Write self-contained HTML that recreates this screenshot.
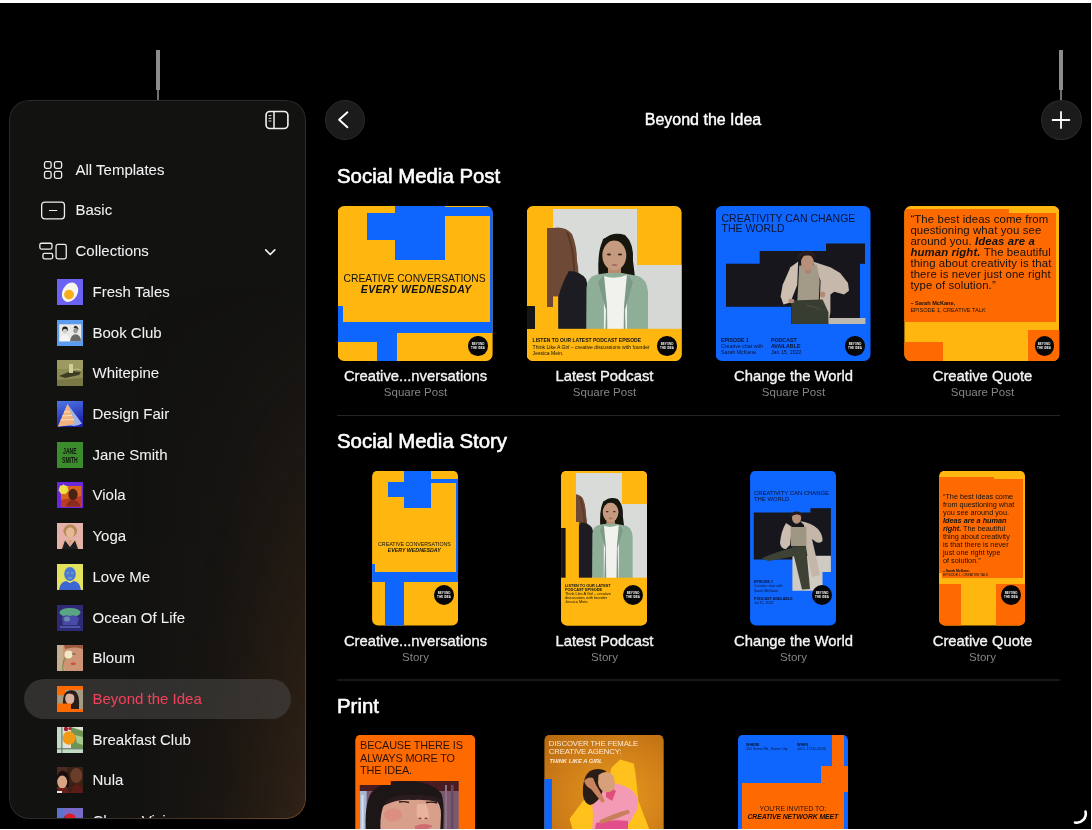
<!DOCTYPE html>
<html><head><meta charset="utf-8">
<style>
*{box-sizing:border-box;margin:0;padding:0}
html,body{width:1092px;height:830px;overflow:hidden;background:#000}
body{position:relative;font-family:"Liberation Sans",sans-serif;color:#fff}
.abs{position:absolute}
#topw,#rightw,#botw{z-index:50}
#topw{left:0;top:0;width:1092px;height:3px;background:#fff}
#rightw{left:1091px;top:0;width:1px;height:830px;background:#fff}
#botw{left:0;top:829px;width:1092px;height:1px;background:#fff}
.handle{width:4px;height:40px;background:#8c8c8c;top:50px}
.handle2{width:2.4px;height:10px;background:#707070;top:90px}
#panel{left:9.3px;top:99.8px;width:296.6px;height:718.9px;border-radius:20px;background:#121211;overflow:hidden}
#panel::before{content:"";position:absolute;inset:0;border-radius:20px;pointer-events:none;
 background:linear-gradient(90deg, rgba(90,55,25,0) 40%, rgba(90,55,25,.13) 72%, rgba(110,66,30,.34) 100%);
 -webkit-mask:linear-gradient(180deg, rgba(0,0,0,0) 25%, rgba(0,0,0,.55) 65%, #000 100%)}
#panel::after{content:"";position:absolute;inset:0;border-radius:20px;padding:1px;z-index:20;pointer-events:none;
 background:radial-gradient(ellipse 240px 520px at 100% 100%, #6e4628 0%, #4a3422 45%, #2c2b2a 100%);
 -webkit-mask:linear-gradient(#000 0 0) content-box, linear-gradient(#000 0 0);-webkit-mask-composite:xor;mask-composite:exclude}
.row{position:absolute;left:0;width:296px;height:40px;line-height:40px;font-size:15px;color:#f2f2f2;-webkit-text-stroke-width:0.05px}
.row .t{position:absolute;left:66px;top:0}
.coll .t{left:81.5px}
.selrow .t{color:#f0415a}
.thumb{position:absolute;left:46px;top:7px;width:26px;height:26px;overflow:hidden}
.sel{position:absolute;left:13px;width:267px;height:40px;border-radius:20px;background:rgba(70,68,66,.6)}
.circ{position:absolute;width:40px;height:40px;border-radius:50%;background:#1b1b1b;border:1px solid #2a2a2a}
.h2{position:absolute;left:337px;font-size:20.4px;-webkit-text-stroke:0.6px #fff;line-height:24px;white-space:nowrap}
.card{position:absolute;clip-path:inset(0 round 6.5px)}
.ct{position:absolute;width:200px;text-align:center;font-size:14.8px;-webkit-text-stroke:0.35px #f4f4f4;line-height:16px;color:#f4f4f4;white-space:nowrap}
.cs{position:absolute;width:200px;text-align:center;font-size:11.5px;line-height:14px;color:#858585;white-space:nowrap}
.sep{position:absolute;left:337px;width:723px;height:1px;background:#252525}
.r{position:absolute}
.logo{position:absolute;width:19.5px;height:19.5px;border-radius:50%;background:#060606}
.logo::after{content:"BEYOND\A THE IDEA";white-space:pre;position:absolute;left:50%;top:50%;width:60px;height:24px;margin-left:-30px;margin-top:-12px;font-size:9px;line-height:12.6px;padding-top:0;font-weight:bold;color:#f2f2f2;text-align:center;transform:scale(.33);transform-origin:50% 50%;letter-spacing:0}
.b{background:#0f66ff}
.tx{white-space:nowrap;color:#111}
body{-webkit-font-smoothing:antialiased}
.sm{transform-origin:0 0}
#root{position:absolute;left:0;top:0;width:1092px;height:830px;overflow:hidden;will-change:transform}

</style></head>
<body>
<svg width="0" height="0" style="position:absolute">
 <defs>
  <filter id="tb" x="-5%" y="-5%" width="110%" height="110%"><feGaussianBlur stdDeviation="0.3"/></filter>
  <filter id="soft" x="-5%" y="-5%" width="110%" height="110%"><feGaussianBlur stdDeviation="0.45"/></filter>
  <g id="podcastPeople">
   <path d="M26 22 Q38 20 45 28 Q50 40 50 55 Q53 68 50 80 Q46 96 38 101 L26 101 L20 101 L20 22 Z" fill="#6e4a35"/>
   <path d="M40 26 Q46 40 47 60 Q48 70 44 84 Q41 90 36 95" fill="none" stroke="#5a3826" stroke-width="2"/>
   <path d="M42 65 Q53 65 59 73 Q65 92 67 124 L69 175 L31 175 L31 92 Q36 74 42 65 Z" fill="#1d1e21"/>
   <path d="M71.6 71 Q70 42 77 33 Q86 25 98 29 Q107 37 106 55 L108 71 Z" fill="#17130f"/>
   <rect x="81" y="57" width="13" height="15" fill="#b98b70"/>
   <ellipse cx="87.3" cy="49.5" rx="12" ry="15" fill="#c69a7e"/>
   <path d="M75 38 Q86 30 100 38 L99 33 Q88 27 76 33 Z" fill="#17130f"/>
   <ellipse cx="82" cy="48.5" rx="2.2" ry="0.9" fill="#3a2a22"/><ellipse cx="93" cy="48.5" rx="2.2" ry="0.9" fill="#3a2a22"/>
   <ellipse cx="87.5" cy="59" rx="3" ry="1.1" fill="#a86a5e"/>
   <path d="M58.9 175 L59.5 82 Q60 71 70 68.5 L80 67 L95 67 L111 70 Q120 73 121 86 L121 175 Z" fill="#8fae98"/>
   <path d="M76.8 175 L77 70 Q87 74 100 69 L100 175 Z" fill="#f1f1ee"/>
   <path d="M77 69 L71 76 L79 104 L77 175 L81 175 L80 100 Z" fill="#7b9a85"/>
   <path d="M100 68.5 L106 76 L98 104 L100 175 L96 175 L97 100 Z" fill="#7b9a85"/>
  </g>
  <g id="seated">
   <path d="M10 57.8 H43.7 V45 H110 V37.5 H149 V118 H75 V100.7 H10 Z" fill="#12161d"/>
   <rect x="144" y="57.8" width="5.5" height="54.2" fill="#0f66ff"/>
   <rect x="112.4" y="112" width="37" height="6" fill="#bdb8b0"/>
   <path d="M96.8 55.4 L114.4 61.3 L124.2 67.1 L132 76.9 L133 84.7 L128.1 88.6 L118.3 85.7 L114.4 88.6 L114.4 106.2 L112.4 118 L102.7 118 L103.7 96.4 L104.6 75 Z" fill="#c6b8aa"/>
   <path d="M83.2 59.4 L100.7 58.4 L103.7 75 L102.7 96.4 L81.2 96.4 L82.2 78.9 Z" fill="#a39a88"/>
   <path d="M82.2 55.4 L74.4 61.3 L66.6 78.9 L64.6 90.6 L67.5 98.4 L74.4 96.4 L81.2 78.9 Z" fill="#cdbfb2"/>
   <path d="M75.3 94.5 L106.6 93.5 L112.4 106.2 L112.4 118 L75.3 118 Z" fill="#383c30"/>
   <path d="M90 100 Q98 99 104 104" stroke="#4a4e40" stroke-width="1.2" fill="none"/>
   <rect x="89" y="61.3" width="6" height="6" fill="#a88470"/>
   <ellipse cx="91.4" cy="56.4" rx="6.4" ry="7.8" fill="#b8907a"/>
   <path d="M81.2 55 Q80 44.7 90.5 44.7 Q101 44.7 100.7 54 Q98 49 91 49.5 Q84 49.5 81.2 55 Z" fill="#2a1f1a"/>
   <ellipse cx="75.3" cy="95" rx="3" ry="2.2" fill="#b08a76"/>
   <ellipse cx="106.6" cy="88.6" rx="2.6" ry="3" fill="#b08a76"/>
  </g>
 </defs>
</svg>

<div id="root">
<div id="topw" class="abs"></div>
<div id="rightw" class="abs"></div>
<div id="botw" class="abs"></div>
<div class="abs handle" style="left:156px"></div>
<div class="abs handle2" style="left:156.8px"></div>
<div class="abs handle" style="left:1059px"></div>
<div class="abs handle2" style="left:1059.8px"></div>
<div id="panel" class="abs"><div style="position:absolute;left:1.7px;top:1.2px;width:294px;height:717px">
<svg class="abs" style="left:253px;top:9px" width="26" height="21" viewBox="0 0 26 21"><rect x="2.05" y="1.5" width="21.85" height="17" rx="3.8" fill="none" stroke="#f2f2f2" stroke-width="1.6"/><line x1="10" y1="1.5" x2="10" y2="18.5" stroke="#f2f2f2" stroke-width="1.5"/><line x1="4.6" y1="5.6" x2="7.4" y2="5.6" stroke="#ddd" stroke-width="1"/><line x1="4.6" y1="8.4" x2="7.4" y2="8.4" stroke="#ddd" stroke-width="1"/><line x1="4.6" y1="11" x2="7.4" y2="11" stroke="#ddd" stroke-width="1"/></svg>
<svg class="abs" style="left:32px;top:59px" width="21" height="21" viewBox="0 0 21 21"><rect x="1.5" y="1.65" width="6.65" height="6.7" rx="1.8" fill="none" stroke="#eee" stroke-width="1.3"/><rect x="11.45" y="1.65" width="7.2" height="6.7" rx="1.8" fill="none" stroke="#eee" stroke-width="1.3"/><rect x="1.5" y="11.45" width="6.65" height="6.9" rx="1.8" fill="none" stroke="#eee" stroke-width="1.3"/><rect x="11.45" y="11.45" width="7.2" height="6.9" rx="1.8" fill="none" stroke="#eee" stroke-width="1.3"/></svg>
<svg class="abs" style="left:29px;top:99px" width="27" height="21" viewBox="0 0 27 21"><rect x="1.65" y="2.15" width="22.8" height="16.7" rx="3" fill="none" stroke="#eee" stroke-width="1.3"/><line x1="9" y1="10.5" x2="17.2" y2="10.5" stroke="#eee" stroke-width="1.2"/></svg>
<svg class="abs" style="left:27px;top:140px" width="30" height="20" viewBox="0 0 30 20"><rect x="1.85" y="2.25" width="12.1" height="5.8" rx="1.5" fill="none" stroke="#eee" stroke-width="1.3"/><rect x="4.95" y="12.45" width="9.7" height="5.4" rx="1.5" fill="none" stroke="#eee" stroke-width="1.3"/><rect x="18.05" y="3.45" width="10.2" height="14.4" rx="1.8" fill="none" stroke="#eee" stroke-width="1.3"/></svg>
<svg class="abs" style="left:252px;top:146px" width="14" height="10" viewBox="0 0 14 10"><path d="M2.7 2.8 L7.25 7.5 L11.8 2.8" fill="none" stroke="#f0f0f0" stroke-width="1.7" stroke-linecap="round" stroke-linejoin="round"/></svg>
<div class="row" style="top:49px"><span class="t" style="left:64.5px">All Templates</span></div>
<div class="row" style="top:89.5px"><span class="t" style="left:64.5px">Basic</span></div>
<div class="row" style="top:130px"><span class="t" style="left:64.5px">Collections</span></div>

<div class="sel" style="top:578px"></div>
<div class="row coll" style="top:171.0px"><div class="thumb"><svg width="26" height="26" viewBox="0 0 26 26" style="position:absolute;left:0;top:0"><g filter="url(#tb)"><rect width="26" height="26" fill="#6a62f2"/><ellipse cx="13" cy="13.2" rx="7.6" ry="10.2" transform="rotate(28 13 13.2)" fill="#f7f6ec"/><circle cx="12" cy="15.6" r="4.9" fill="#f7ad1c"/></g></svg></div><span class="t">Fresh Tales</span></div>
<div class="row coll" style="top:211.7px"><div class="thumb"><svg width="26" height="26" viewBox="0 0 26 26" style="position:absolute;left:0;top:0"><g filter="url(#tb)"><rect width="26" height="26" fill="#5b9cf0"/><rect x="2.2" y="4.3" width="22" height="17" fill="#ebe9e6"/><circle cx="8" cy="9.2" r="2.8" fill="#1c1c1c"/><ellipse cx="8" cy="11.2" rx="2.2" ry="2.4" fill="#cfcfcf"/><path d="M2.5 21.3 Q3.5 14.5 8 14.5 Q12 14.5 13 21.3 Z" fill="#f4f4f4"/><path d="M16.5 7.5 Q18 4.8 20 6.4 Q22 8 21.2 10 Z" fill="#2a2a2a"/><ellipse cx="18.6" cy="10.6" rx="2.3" ry="2.6" fill="#9a9a9a"/><path d="M13 21.3 Q13.8 14.5 18.6 14.2 Q23.6 14.5 24.2 21.3 Z" fill="#6a6a6a"/></g></svg></div><span class="t">Book Club</span></div>
<div class="row coll" style="top:252.4px"><div class="thumb"><svg width="26" height="26" viewBox="0 0 26 26" style="position:absolute;left:0;top:0"><g filter="url(#tb)"><rect width="26" height="26" fill="#8e8c54"/><rect y="0" width="26" height="9" fill="#9c9a60"/><path d="M2 16 L14 11 L24 12 L22 15 L8 18 Z" fill="#3e3c26"/><rect x="12" y="4" width="4" height="9" fill="#d0cf98"/><path d="M0 20 L26 18 V26 H0 Z" fill="#7a7846"/><path d="M16 10 Q20 8 24 10" stroke="#c8c690" stroke-width="1" fill="none"/></g></svg></div><span class="t">Whitepine</span></div>
<div class="row coll" style="top:293.1px"><div class="thumb"><svg width="26" height="26" viewBox="0 0 26 26" style="position:absolute;left:0;top:0"><g filter="url(#tb)"><defs><linearGradient id="dfg" x1="0" y1="0" x2="0.3" y2="1"><stop offset="0" stop-color="#4f78e6"/><stop offset="1" stop-color="#1e22a8"/></linearGradient></defs><rect width="26" height="26" fill="url(#dfg)"/><path d="M10.5 3 L25 22.5 Q20 26 13 24.5 L1 25.5 Z" fill="#9fb4e8"/><path d="M10.5 3 L18 22 L13 24 L1 25.5 Z" fill="#f2b27a"/><path d="M5 15 L15 14.5 M3.5 19 L17 18.5 M7 11 L13 10.8" stroke="#ffe0c0" stroke-width="1"/></g></svg></div><span class="t">Design Fair</span></div>
<div class="row coll" style="top:333.8px"><div class="thumb"><svg width="26" height="26" viewBox="0 0 26 26" style="position:absolute;left:0;top:0"><g><rect width="26" height="26" fill="#3a8c2c"/><text x="20.8" y="12.2" font-family="Liberation Sans" font-weight="bold" font-size="8.2" text-anchor="middle" fill="#0e160a" transform="scale(0.62 1)">JANE</text><text x="20.8" y="20.6" font-family="Liberation Sans" font-weight="bold" font-size="8.2" text-anchor="middle" fill="#0e160a" transform="scale(0.62 1)">SMITH</text></g></svg></div><span class="t">Jane Smith</span></div>
<div class="row coll" style="top:374.5px"><div class="thumb"><svg width="26" height="26" viewBox="0 0 26 26" style="position:absolute;left:0;top:0"><g filter="url(#tb)"><rect width="26" height="26" fill="#6a28d8"/><rect x="4" y="4" width="20.5" height="20.5" fill="#d8661a"/><path d="M4 18 L24.5 14 V24.5 H4 Z" fill="#b83a22"/><ellipse cx="16" cy="12.5" rx="4.6" ry="5.8" fill="#4a2416"/><path d="M9 24.5 Q11 18 16 18 Q22 18 23 24.5 Z" fill="#8a2a1c"/><circle cx="6.5" cy="7.5" r="4.6" fill="#ece04a"/><path d="M6.5 1.5 L7.6 5 L11 4 L8.8 7.2 L12 9 L8.2 9.5 L8.4 13 L6.3 10.2 L3.8 12.8 L4.2 9.2 L1 8.2 L4.2 6.4 L2.8 3.4 L5.8 4.6 Z" fill="#ece04a"/></g></svg></div><span class="t">Viola</span></div>
<div class="row coll" style="top:415.2px"><div class="thumb"><svg width="26" height="26" viewBox="0 0 26 26" style="position:absolute;left:0;top:0"><g filter="url(#tb)"><rect width="26" height="26" fill="#e4b2a8"/><ellipse cx="13.2" cy="8" rx="6.8" ry="6.5" fill="#b88a58"/><ellipse cx="13.2" cy="9.5" rx="4.3" ry="5.2" fill="#e8b898"/><path d="M3 26 Q5 16 13 16 Q21 16 23 26 Z" fill="#e2ae96"/><path d="M5 26 L8 17.5 L13 24 L18 17.5 L21 26 Z" fill="#1e1e24"/><path d="M11.5 17 L13 23 L14.5 17 Z" fill="#d89c84"/></g></svg></div><span class="t">Yoga</span></div>
<div class="row coll" style="top:455.9px"><div class="thumb"><svg width="26" height="26" viewBox="0 0 26 26" style="position:absolute;left:0;top:0"><g filter="url(#tb)"><rect width="26" height="26" fill="#e2e25e"/><ellipse cx="13" cy="10" rx="5.8" ry="7" fill="#4a78d8"/><path d="M2 26 Q3 18 9 17 L13 19 L17 17 Q23 18 24 26 Z" fill="#3a66d4"/><path d="M9.5 9 H12 M14 9 H16.5 M11 14 H15" stroke="#e2e25e" stroke-width="0.9" opacity=".6"/></g></svg></div><span class="t">Love Me</span></div>
<div class="row coll" style="top:496.6px"><div class="thumb"><svg width="26" height="26" viewBox="0 0 26 26" style="position:absolute;left:0;top:0"><g filter="url(#tb)"><rect width="26" height="26" fill="#2e2c74"/><ellipse cx="13" cy="7.5" rx="10.5" ry="4.5" fill="#5aa684"/><path d="M5 12 Q9 9 13 11 Q18 9 22 13 L20 20 L6 20 Z" fill="#4a4aa8"/><path d="M3 22 H23" stroke="#5a66b8" stroke-width="1.4"/><ellipse cx="10" cy="14" rx="3" ry="2.5" fill="#6a8ab0"/></g></svg></div><span class="t">Ocean Of Life</span></div>
<div class="row coll" style="top:537.3px"><div class="thumb"><svg width="26" height="26" viewBox="0 0 26 26" style="position:absolute;left:0;top:0"><g filter="url(#tb)"><rect width="26" height="26" fill="#c6ae8e"/><path d="M6 0 H26 V26 H8 Q6 16 6 0 Z" fill="#cf9474"/><path d="M7 0 H26 V4 Q18 1 8 4 Z" fill="#9a5a3a"/><circle cx="11.5" cy="9.6" r="4" fill="#eeeac8"/><path d="M8 13 Q5 19 6 26" stroke="#7a8a50" stroke-width="1.2" fill="none"/><ellipse cx="16.3" cy="18.8" rx="2.6" ry="1.3" fill="#c8503a"/><path d="M15 9 H18.5" stroke="#5a3a2a" stroke-width="0.8"/></g></svg></div><span class="t">Bloum</span></div>
<div class="row coll selrow" style="top:578.0px"><div class="thumb"><svg width="26" height="26" viewBox="0 0 26 26" style="position:absolute;left:0;top:0"><g filter="url(#tb)"><rect width="26" height="26" fill="#ff6a00"/><rect x="8" y="3.9" width="18" height="19.1" fill="#a69a82"/><rect x="0.8" y="9.2" width="8" height="9.1" fill="#a69a82"/><path d="M6 23 Q5 10 9 6 Q13 3 18 5 Q23 8 22 23 Z" fill="#2a1c18"/><ellipse cx="12.8" cy="12.5" rx="4.6" ry="6" fill="#d9b0a0"/><path d="M8.5 9 Q12 6 17 9 L17 7 Q12 4.5 8.5 7.5 Z" fill="#2a1c18"/><rect x="0" y="17.5" width="14" height="8.5" fill="#ff6a00"/></g></svg></div><span class="t">Beyond the Idea</span></div>
<div class="row coll" style="top:618.7px"><div class="thumb"><svg width="26" height="26" viewBox="0 0 26 26" style="position:absolute;left:0;top:0"><g filter="url(#tb)"><rect width="26" height="26" fill="#c2dcc6"/><rect x="5.4" y="0" width="20.6" height="21.3" fill="#dfe2d4"/><path d="M14 0 L26 4 V21.3 H14 Z" fill="#6e9456"/><path d="M18 8 L26 10 L26 18 L20 16 Z" fill="#a8c890"/><ellipse cx="12" cy="11" rx="6.4" ry="6.8" fill="#f09a18"/><circle cx="9" cy="2" r="2.2" fill="#a01e30"/><circle cx="13" cy="1.5" r="1.6" fill="#b02038"/><rect x="4.4" y="0" width="1" height="26" fill="#5a6a60"/><rect x="0" y="21.3" width="26" height="1" fill="#5a6a60"/></g></svg></div><span class="t">Breakfast Club</span></div>
<div class="row coll" style="top:659.4px"><div class="thumb"><svg width="26" height="26" viewBox="0 0 26 26" style="position:absolute;left:0;top:0"><g filter="url(#tb)"><rect width="26" height="26" fill="#4e2c22"/><path d="M10 0 H26 V26 H10 Z" fill="#3a2019"/><ellipse cx="19.3" cy="8.5" rx="6" ry="7.6" fill="#6a3e2c"/><path d="M14 26 Q14 18 20 17 Q26 18 26 26 Z" fill="#5a1a18"/><path d="M0 9 Q2 3 7 4 Q12 5 12 12 L12 20 L0 20 Z" fill="#1a1010"/><ellipse cx="5.2" cy="15" rx="5" ry="6.4" fill="#d8a484"/><path d="M0 22 Q6 19 14 26 H0 Z" fill="#6a1a18"/><rect x="0" y="24" width="5" height="2" fill="#e8e8e8"/></g></svg></div><span class="t">Nula</span></div>
<div class="row coll" style="top:700.1px"><div class="thumb"><svg width="26" height="26" viewBox="0 0 26 26" style="position:absolute;left:0;top:0"><g filter="url(#tb)"><rect width="26" height="26" fill="#7a6ac8"/><rect width="6" height="26" fill="#5a72cc"/><path d="M4 26 Q3 8 12 6 Q20 6 21 26 Z" fill="#1a1420"/><ellipse cx="13" cy="12" rx="6" ry="6.6" fill="#e01e24"/></g></svg></div><span class="t">Charm Vision</span></div>
</div></div>
<div class="circ" style="left:324.6px;top:99.6px;width:40.6px;height:40.6px"></div>
<svg class="abs" style="left:335px;top:110px" width="20" height="20" viewBox="0 0 20 20"><path d="M12.4 2.3 L4.1 9.8 L12.4 17.3" fill="none" stroke="#fff" stroke-width="1.9" stroke-linecap="round" stroke-linejoin="round"/></svg>
<div class="abs" style="left:603px;top:111px;width:200px;text-align:center;font-size:16px;-webkit-text-stroke:0.4px #fff;line-height:18px">Beyond the Idea</div>
<div class="circ" style="left:1040.9px;top:99.6px;width:40.7px;height:40.6px"></div>
<svg class="abs" style="left:1051.2px;top:110px" width="20" height="20" viewBox="0 0 20 20"><path d="M10 1.9 V18.1 M1.6 10 H18.4" fill="none" stroke="#fff" stroke-width="1.8" stroke-linecap="round"/></svg>

<div class="h2" style="top:164px">Social Media Post</div>
<div class="ct" style="left:315.5px;top:367.7px">Creative...nversations</div>
<div class="cs" style="left:315.5px;top:384.5px">Square Post</div>
<div class="ct" style="left:504.5px;top:367.7px">Latest Podcast</div>
<div class="cs" style="left:504.5px;top:384.5px">Square Post</div>
<div class="ct" style="left:693.5px;top:367.7px">Change the World</div>
<div class="cs" style="left:693.5px;top:384.5px">Square Post</div>
<div class="ct" style="left:882.5px;top:367.7px">Creative Quote</div>
<div class="cs" style="left:882.5px;top:384.5px">Square Post</div>
<div class="sep" style="top:415px"></div>
<div class="h2" style="top:429px">Social Media Story</div>
<div class="ct" style="left:315.5px;top:632.5px">Creative...nversations</div>
<div class="cs" style="left:315.5px;top:650px">Story</div>
<div class="ct" style="left:504.5px;top:632.5px">Latest Podcast</div>
<div class="cs" style="left:504.5px;top:650px">Story</div>
<div class="ct" style="left:693.5px;top:632.5px">Change the World</div>
<div class="cs" style="left:693.5px;top:650px">Story</div>
<div class="ct" style="left:882.5px;top:632.5px">Creative Quote</div>
<div class="cs" style="left:882.5px;top:650px">Story</div>
<div class="sep" style="top:679px;height:2px;background:#171717"></div>
<div class="h2" style="top:693.8px">Print</div>

<!-- Card 1: Creative Conversations -->
<div class="card" style="left:337.6px;top:206px;width:155px;height:155px;background:#ffb70f">
 <div class="r b" style="left:57.4px;top:0;width:50.2px;height:53.5px"></div>
 <div class="r b" style="left:29px;top:7px;width:28.6px;height:27.4px"></div>
 <div class="r b" style="left:107.4px;top:1.2px;width:47.6px;height:9px"></div>
 <div class="r b" style="left:152.4px;top:1.2px;width:2.6px;height:115px"></div>
 <div class="r b" style="left:0;top:115.6px;width:155px;height:11.1px"></div>
 <div class="r b" style="left:0;top:100px;width:5px;height:27px"></div>
 <div class="r b" style="left:0;top:126px;width:59.7px;height:10px"></div>
 <div class="r b" style="left:39.2px;top:126px;width:20.5px;height:29px"></div>
 <div class="r tx" style="left:6px;top:66.5px;font-size:10.3px;line-height:11px">CREATIVE CONVERSATIONS</div>
 <div class="r tx" style="left:23.2px;top:77.8px;font-size:10.5px;line-height:11px;font-weight:bold;font-style:italic;letter-spacing:0.35px">EVERY WEDNESDAY</div>
 <div class="logo" style="left:130.5px;top:130.2px"></div>
</div>
<!-- Card 2: Latest Podcast -->
<div class="card" style="left:526.6px;top:206px;width:155px;height:155px;background:#ffb70f">
 <div class="r" style="left:26.5px;top:2.7px;width:83.5px;height:120.1px;background:#d9dbd9"></div>
 <div class="r" style="left:110px;top:59px;width:45px;height:63.8px;background:#d6d8d6"></div>
 <div class="r" style="left:0;top:100px;width:8px;height:22.8px;background:#151515"></div>
 <svg class="r" style="left:0;top:0" width="155" height="155"><g filter="url(#soft)"><use href="#podcastPeople"/></g><rect x="26" y="90.4" width="5.2" height="34" fill="#ffb70f"/><rect x="0" y="122.8" width="155" height="33" fill="#ffb70f"/><rect x="0" y="100" width="8" height="22.8" fill="#151515"/></svg>
 <div class="r tx" style="left:6px;top:131px;font-size:5px;line-height:6px;font-weight:bold">LISTEN TO OUR LATEST PODCAST EPISODE</div>
 <div class="r tx" style="left:6px;top:137.5px;font-size:5.1px;line-height:6.2px">Think Like A Girl – creative discussions with founder<br>Jessica Mein.</div>
 <div class="logo" style="left:130.5px;top:130.2px"></div>
</div>
<!-- Card 3: Change the World -->
<div class="card" style="left:715.5px;top:206px;width:155px;height:155px;background:#0f66ff">
 <div class="r tx" style="left:6px;top:6.7px;font-size:10.5px;line-height:10.5px;color:#0b1230">CREATIVITY CAN CHANGE<br>THE WORLD</div>
 <svg class="r" style="left:0;top:0" width="155" height="155"><g filter="url(#soft)"><use href="#seated"/></g></svg>
 <div class="r tx" style="left:5.5px;top:131px;font-size:5.3px;line-height:6.2px;color:#0b1230"><b>EPISODE 1</b><br>Creative chat with<br>Sarah McKane.</div>
 <div class="r tx" style="left:55.4px;top:131px;font-size:5.3px;line-height:6.2px;color:#0b1230"><b>PODCAST<br>AVAILABLE</b><br>Jan 15, 2022</div>
 <div class="logo" style="left:129.5px;top:130.2px"></div>
</div>
<!-- Card 4: Creative Quote -->
<div class="card" style="left:904.4px;top:206px;width:155px;height:155px;background:#ffb70f">
 <div class="r" style="left:0;top:3px;width:152px;height:112.7px;background:#ff6a00"></div>
 <div class="r" style="left:105px;top:0;width:50px;height:7px;background:#ffb70f"></div>
 <div class="r" style="left:0;top:135.8px;width:38.7px;height:20px;background:#ff6a00"></div>
 <div class="r" style="left:123.5px;top:124px;width:32px;height:31px;background:#ff6a00"></div>
 <div class="r tx" style="left:6px;top:7.8px;font-size:11.4px;line-height:10.97px;letter-spacing:0.1px">“The best ideas come from<br>questioning what you see<br>around you. <b><i>Ideas are a</i></b><br><b><i>human right.</i></b> The beautiful<br>thing about creativity is that<br>there is never just one right<br>type of solution.”</div>
 <div class="r tx" style="left:6px;top:94.3px;font-size:5.6px;line-height:6.6px"><b>– Sarah McKane,</b><br>EPISODE 1, CREATIVE TALK</div>
 <div class="logo" style="left:130.3px;top:130.3px"></div>
</div>

<!-- Story 1 -->
<div class="card" style="left:372.1px;top:470.6px;width:86px;height:155px;background:#ffb70f;clip-path:inset(0 round 6px)">
 <div class="r b" style="left:31.8px;top:0;width:27.4px;height:37.2px"></div>
 <div class="r b" style="left:16.1px;top:11.3px;width:15.7px;height:15.3px"></div>
 <div class="r b" style="left:59.2px;top:8px;width:26.8px;height:4.7px"></div>
 <div class="r b" style="left:83.7px;top:8px;width:3px;height:94px"></div>
 <div class="r b" style="left:0;top:93.8px;width:2.6px;height:8px"></div>
 <div class="r b" style="left:0;top:101.7px;width:86px;height:10px"></div>
 <div class="r b" style="left:13.1px;top:111.5px;width:19.3px;height:44px"></div>
 <div class="r tx sm" style="left:6px;top:71.6px;font-size:12px;line-height:13px;transform:scale(.44)">CREATIVE CONVERSATIONS<br><span style="margin-left:22px"><b><i>EVERY WEDNESDAY</i></b></span></div>
 <div class="logo" style="left:61.8px;top:114.7px;width:20px;height:20px"></div>
</div>
<!-- Story 2 -->
<div class="card" style="left:561.1px;top:470.6px;width:86px;height:155px;background:#ffb70f;clip-path:inset(0 round 6px)">
 <svg class="r" style="left:0;top:0" width="86" height="155">
  <rect x="15" y="2" width="71" height="105" fill="#d9dbd9"/>
  <g transform="translate(-7.6 8.9) scale(.655)" filter="url(#soft)"><use href="#podcastPeople"/></g>
  <rect x="61" y="0" width="25" height="33" fill="#ffb70f"/>
  <rect x="0" y="0" width="15" height="107" fill="#ffb70f"/>
  <rect x="15" y="51" width="2.9" height="56" fill="#ffb70f"/>
  <rect x="0" y="57" width="4.6" height="50" fill="#1a1410"/>
  <rect x="0" y="106.7" width="86" height="49" fill="#ffb70f"/>
 </svg>
 <div class="r tx sm" style="left:4.2px;top:113.5px;font-size:9px;line-height:9.2px;transform:scale(.43)"><b>LISTEN TO OUR LATEST<br>PODCAST EPISODE</b><br>Think Like A Girl – creative<br>discussions with founder<br>Jessica Mein.</div>
 <div class="logo" style="left:61.8px;top:114.7px;width:20px;height:20px"></div>
</div>
<!-- Story 3 -->
<div class="card" style="left:750.1px;top:470.6px;width:86px;height:155px;background:#0f66ff;clip-path:inset(0 round 6px)">
 <div class="r tx sm" style="left:3.6px;top:20.8px;font-size:12px;line-height:11.6px;color:#0b1230;transform:scale(.49)">CREATIVITY CAN CHANGE<br>THE WORLD</div>
 <svg class="r" style="left:0;top:0" width="86" height="155"><g filter="url(#soft)">
  <path d="M3.8 41.4 H60.4 V37.2 H80.9 V88.4 H3.8 Z" fill="#12161d"/>
  <path d="M42.4 84.8 H80.9 V101 H72.5 V119.8 H42.4 Z" fill="#cfcbc3"/>
  <path d="M36 52 Q31 60 30 72 Q31 78 36 78 L40 74 L42 56 Z" fill="#cbbdb0"/>
  <path d="M50 50 Q62 52 68 58 Q73 64 72.5 70 Q70 73 66 71 L62 68 Q66 85 70 104 L62 106 L56 78 L54 54 Z" fill="#c4b6a8"/>
  <path d="M40.6 56 L56.2 55.9 L56.5 75 L41 75.2 Z" fill="#9e9583"/>
  <path d="M11.6 87.2 Q28 80 47.8 75.2 L54 76 L50 84 Q30 88 18 90 Z" fill="#3e4236"/>
  <path d="M41.8 76 L56 75.2 L60 118 L52 118.6 Z" fill="#3e4236"/>
  <ellipse cx="46.6" cy="47" rx="4.6" ry="5.8" fill="#b8907c"/>
  <path d="M41 46 Q41 40.5 46.5 40.5 Q52.5 40.5 52.5 46 Q50 43 46.5 43.5 Q43 43.5 41 46 Z" fill="#2a1f1a"/>
 </g></svg>
 <div class="r tx sm" style="left:3.6px;top:109.3px;font-size:9px;line-height:10.4px;color:#0b1230;transform:scale(.40)"><b>EPISODE 1</b><br>Creative chat with<br>Sarah McKane.<br><br><b>PODCAST AVAILABLE</b><br>Jul 15, 2022</div>
 <div class="logo" style="left:61.8px;top:114.7px;width:20px;height:20px"></div>
</div>
<!-- Story 4 -->
<div class="card" style="left:939.1px;top:470.6px;width:86px;height:155px;background:#ffb70f;clip-path:inset(0 round 6px)">
 <div class="r" style="left:0;top:6.4px;width:55px;height:101.3px;background:#ff6a00"></div>
 <div class="r" style="left:55px;top:8.4px;width:28.7px;height:99.3px;background:#ff6a00"></div>
 <div class="r" style="left:0;top:113px;width:22px;height:42px;background:#ff6a00"></div>
 <div class="r" style="left:57.3px;top:113px;width:28.7px;height:42px;background:#ff6a00"></div>
 <div class="r" style="left:0;top:102px;width:2.6px;height:10px;background:#ffb70f"></div>
 <div class="r tx sm" style="left:3.6px;top:22.2px;font-size:14px;line-height:15.3px;transform:scale(.52)">“The best ideas come<br>from questioning what<br>you see around you.<br><b><i>Ideas are a human</i></b><br><b><i>right.</i></b> The beautiful<br>thing about creativity<br>is that there is never<br>just one right type<br>of solution.”</div>
 <div class="r tx sm" style="left:3.6px;top:98.3px;font-size:8px;line-height:9px;transform:scale(.42)"><b>– Sarah McKane,</b><br>EPISODE 1, CREATIVE TALK</div>
 <div class="logo" style="left:61.8px;top:114.7px;width:20px;height:20px"></div>
</div>

<!-- Print 1 -->
<div class="card" style="left:355.3px;top:734.5px;width:120px;height:100px;background:#ff6a00;clip-path:inset(0 round 6px 6px 0 0)">
 <div class="r tx" style="left:4.8px;top:4.8px;font-size:10.9px;line-height:12.2px;color:#2a1208;letter-spacing:-0.15px">BECAUSE THERE IS<br>ALWAYS MORE TO<br>THE IDEA.</div>
 <svg class="r" style="left:0;top:0" width="120" height="100"><defs><clipPath id="p1c"><path d="M4.6 50 H35.8 V46.1 H103.7 V100 H4.6 Z"/></clipPath></defs><g clip-path="url(#p1c)"><g filter="url(#soft)">
  <rect x="0" y="40" width="110" height="60" fill="#7a5a70"/>
  <rect x="4.6" y="46" width="100" height="10" fill="#4a1a24"/>
  <rect x="4.6" y="56" width="7" height="44" fill="#a8b8d4"/>
  <rect x="6.5" y="60" width="2" height="40" fill="#d8e0ec"/>
  <rect x="90" y="50" width="2" height="50" fill="#8e7084"/>
  <rect x="96" y="50" width="2.5" height="50" fill="#6a4a60"/>
  <path d="M11 100 Q9 70 16 58 Q26 46 50 46 Q76 46 86 58 Q90 66 88 100 Z" fill="#1e1418"/>
  <path d="M26 100 Q24 84 28 72 Q34 64 48 64.5 Q66 63.5 80 65 Q86 68 86 80 L85 100 Z" fill="#d8a08a"/>
  <path d="M30 66 Q44 58 60 60 Q74 59 86 64 L86 68 Q72 64 58 65 Q42 64 30 70 Z" fill="#2a1a1e"/>
  <ellipse cx="38" cy="80" rx="9" ry="6.5" fill="#e07c76" opacity=".5"/>
  <path d="M62 69 Q61 78 62.5 83 Q68 86 74 83 Q74 76 71 69 Z" fill="#e8b49e"/>
  <ellipse cx="65" cy="83.4" rx="1.6" ry=".8" fill="#8a4a40"/><ellipse cx="71" cy="83.4" rx="1.6" ry=".8" fill="#8a4a40"/>
  <path d="M44 67 Q49 66 54 67.5" stroke="#2a1818" stroke-width="1.4" fill="none"/>
  <path d="M71 67.5 Q77 66.5 82 68" stroke="#2a1818" stroke-width="1.4" fill="none"/>
  <path d="M60 91 Q69 87 78 91 Q70 97 60 94 Z" fill="#cf6e70"/>
 </g></g></svg>
</div>
<!-- Print 2 -->
<div class="card" style="left:544.4px;top:734.5px;width:119.3px;height:100px;background:radial-gradient(ellipse 100px 90px at 72px 62px,#e69a1e,#cd7c18 60%,#b4680f);clip-path:inset(0 round 6px 6px 0 0)">
 <svg class="r" style="left:0;top:0" width="120" height="100"><g filter="url(#soft)">
  <path d="M76.2 24.6 L89.7 28.6 L91.5 38.6 L94.3 65.7 L105.1 93.7 L106 100 L30 100 L25.6 83.7 L39.2 65.7 L64.4 50.3 L67.2 33.1 Z" fill="#ffc21a"/>
  <path d="M48 100 L49 80 Q47 62 52 52 Q62 46 74 49 Q88 52 93 62 Q96 72 90 80 L84 90 L84 100 Z" fill="#f39ab4"/>
  <path d="M62 54 Q68 52 72 56 L68 66 L62 62 Z" fill="#e0507a"/>
  <path d="M50 100 L52 88 Q66 84 84 86 L84 100 Z" fill="#e2508a"/>
  <path d="M39 60 Q38 42 46 36 Q54 32 62 36 Q60 48 58 58 Q54 68 46 70 Q40 68 39 60 Z" fill="#2a1a12"/>
  <path d="M54.5 40 Q62 34 69 40 Q72 48 70 54 Q66 58 60 57 Q55 54 54 48 Z" fill="#d8a078"/>
  <path d="M40 46 Q44 41 49 43 L52 50 Q57 58 61 66 L58 68 Q52 60 47 54 Q42 52 40 46 Z" fill="#c8845f"/>
  <path d="M55.4 85.5 Q70 78 84.3 74.7 L86 78 Q72 84 57 89 Z" fill="#c8805c"/>
 </g></svg>
 <div class="r" style="left:0;top:44.6px;width:7.8px;height:60px;background:#0f66ff"></div>
 <div class="r tx" style="left:4.4px;top:5.2px;font-size:7.75px;line-height:8.3px;color:#fbe9d4;letter-spacing:-0.1px">DISCOVER THE FEMALE<br>CREATIVE AGENCY:</div>
 <div class="r tx" style="left:5px;top:23.5px;font-size:5.6px;line-height:6px;color:#fbe9d4;font-weight:bold;font-style:italic;letter-spacing:0.1px">THINK LIKE A GIRL</div>
</div>
<!-- Print 3 -->
<div class="card" style="left:737.8px;top:734.5px;width:110.2px;height:100px;background:#0f66ff;clip-path:inset(0 round 6px 6px 0 0)">
 <div class="r" style="left:94px;top:0;width:12.6px;height:31px;background:#ff6a00"></div>
 <div class="r" style="left:83.5px;top:31px;width:26.7px;height:26.5px;background:#ff6a00"></div>
 <div class="r" style="left:4.2px;top:48px;width:102.4px;height:60px;background:#ff6a00"></div>
 <div class="r tx sm" style="left:8px;top:8.8px;font-size:8px;line-height:8.5px;color:#0b1230;transform:scale(.45)"><b>WHERE</b><br>101 Some Rd., Some City</div>
 <div class="r tx sm" style="left:59.2px;top:8.8px;font-size:8px;line-height:8.5px;color:#0b1230;transform:scale(.45)"><b>WHEN</b><br>Jul 5, 17:00-23:00</div>
 <div class="r tx" style="left:0;width:110px;text-align:center;top:70.7px;font-size:6.9px;line-height:8px;color:#2a1208;letter-spacing:-0.1px">YOU’RE INVITED TO:</div>
 <div class="r tx" style="left:0;width:110px;text-align:center;top:78.6px;font-size:6.9px;line-height:8px;font-weight:bold;font-style:italic;color:#1a0c05;letter-spacing:-0.1px">CREATIVE NETWORK MEET</div>
</div>

<svg class="abs" style="left:1070px;top:806px" width="20" height="20" viewBox="0 0 20 20"><path d="M15.5 5.5 A9 9 0 0 1 5 16.5" fill="none" stroke="#fff" stroke-width="2.6" stroke-linecap="round"/></svg>
</div>
</body></html>
